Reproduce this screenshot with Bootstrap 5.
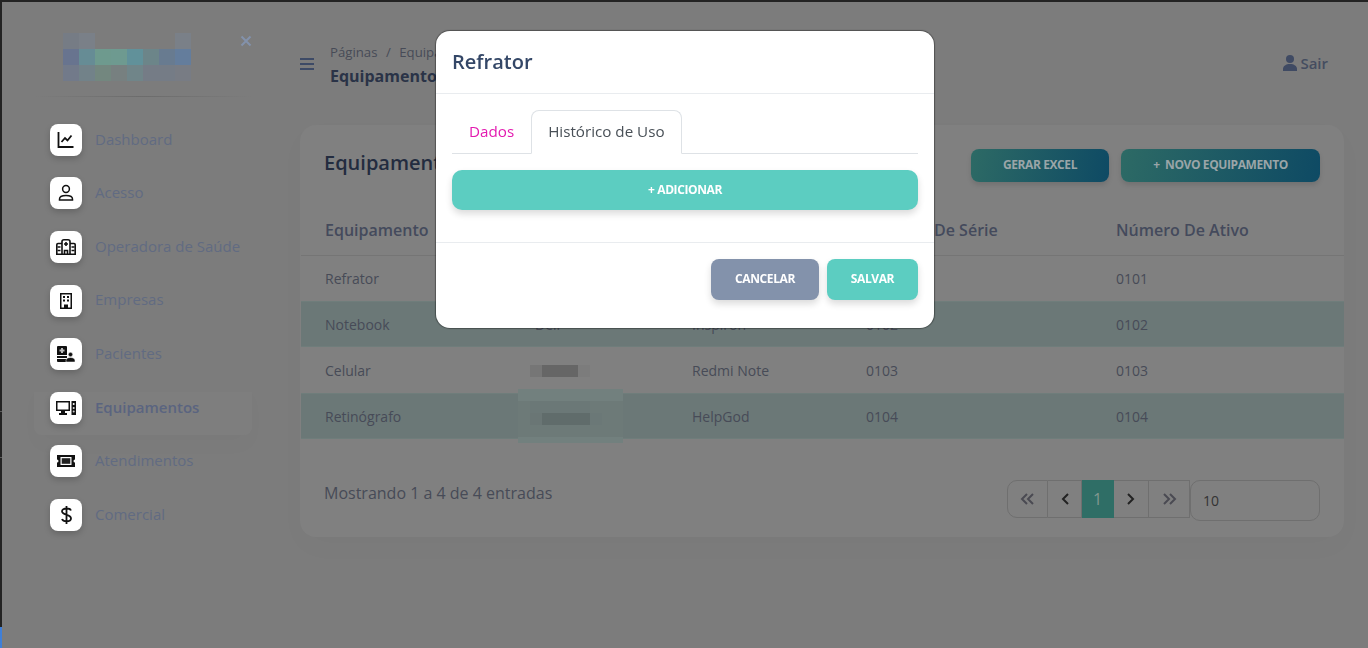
<!DOCTYPE html>
<html lang="pt-BR">
<head>
<meta charset="utf-8">
<title>Equipamentos</title>
<link href="https://cdn.jsdelivr.net/npm/bootstrap@5.3.0/dist/css/bootstrap.min.css" rel="stylesheet">
<style>
html,body{height:100%;overflow:hidden}
body{background:#232323;font-family:"Open Sans","Noto Sans",sans-serif;color:#474b57}
.app-frame{height:100%;padding:2px 0 0 2px;position:relative}
.edge-blue{position:absolute;left:0;bottom:0;width:2px;height:21px;background:#3f7fd8}
.edge-line{position:absolute;left:0;width:2px;height:1px;background:#5c5c5c}
.edge-a{top:411px}.edge-b{top:457px}
.app-body{height:100%;background:#7c7c7c;display:flex}
.side{width:272px;flex:none;padding:31px 22px 0 32px;position:relative}
.logo-box{height:48px;padding-left:29px;margin-bottom:15px}
.side-x{position:absolute;left:238px;top:33px;color:#8392ab}
.side-rule{height:1px;margin:0 0 16px;background:linear-gradient(90deg,transparent,#6c6c6c 50%,transparent)}
.side-item{display:flex;align-items:center;height:53.6px;padding-left:16px;font-size:15px;color:#616b82;text-decoration:none;border-radius:8px}
.side-item.on{font-weight:600;color:#5a6480;background:linear-gradient(180deg,transparent 20%,#7e7e7e 21%);box-shadow:0 12px 20px rgba(0,0,0,.015)}
.side-lbl{position:relative;top:-1px}
.tile{width:32px;height:32px;border-radius:8px;background:#fff;display:flex;align-items:center;justify-content:center;margin-right:13px;box-shadow:0 3px 6px rgba(0,0,0,.18);flex:none}
.tile svg{display:block}
.main-col{flex:1;min-width:0;padding:0 24px 0 26px}
.top-bar{height:123px;padding-top:40px;display:flex;align-items:flex-start}
.burger{width:14px;margin-top:16px;margin-right:16px}
.burger i{display:block;height:2px;background:#3d4a66;margin-bottom:3px}
.crumbs{font-size:13.2px;line-height:20px;color:#474b57}
.crumbs .sep{padding:0 8.5px}
.crumb-title{font-size:16px;font-weight:700;color:#2a3347;line-height:24px;margin-top:2px}
.sair{margin-left:auto;margin-right:16px;margin-top:9px;font-size:15px;font-weight:600;color:#454d60;display:flex;align-items:center;gap:3px;line-height:24px}
.panel{background:#808080;border-radius:16px;height:412px;padding:24px 24px 0 24px;box-shadow:0 10px 30px rgba(0,0,0,.02);position:relative}
.panel-head{display:flex;align-items:flex-start}
.panel-title{font-size:20px;font-weight:600;color:#232c3f;line-height:30px;margin-top:-1px}
.grad-btn{height:33px;border-radius:8px;border:0;padding:0 0 2px;font-size:12px;font-weight:700;letter-spacing:-.025rem;color:#9aa5a8;background:linear-gradient(100deg,#2d6a65,#0e4a64);box-shadow:0 3px 5px rgba(0,0,0,.12)}
.grad-a{width:138px;margin-left:auto;margin-right:12px}
.grad-b{width:199px}
.eq-table{width:1043px;margin:23px -24px 0 -23px;table-layout:fixed;border-collapse:collapse;color:#474b57;font-size:14px}
.eq-table th{font-size:16px;font-weight:600;color:#444a5c;height:50px;padding:0;vertical-align:middle;border-bottom:1px solid #757575}
.eq-table td{height:46px;padding:0;vertical-align:middle}
.eq-table tr>*:first-child{padding-left:24px}
.eq-table tbody tr:nth-child(even) td{background:#6b7877;box-shadow:inset 0 1px 0 #6f7d7b,inset 0 -1px 0 #6f7d7b}
.c1{width:234px}.c2{width:157px}.c3{width:174px}.c4{width:250px}
.foot-row{display:flex;align-items:flex-start;margin-top:41px}
.count-txt{font-size:16px;line-height:24px;color:#474b57;margin-top:1px}
.pager{margin-left:auto;display:flex;height:38px}
.pg{display:flex;align-items:center;justify-content:center;border:1px solid #6f6f6f;border-left-width:0;height:38px;color:#222}
.pg-1{width:41px;border-left-width:1px;border-radius:10px 0 0 10px;color:#4a4a52}
.pg-2{width:34px}
.pg-on{width:32px;background:#2f6e66;color:#82978f;border-color:#2f6e66;font-size:16px}
.pg-3{width:35px}
.pg-4{width:41px;color:#4a4a52}
.size-box{width:130px;height:41px;border:1px solid #6f6f6f;border-radius:10px;font-size:14px;color:#333;padding:9px 12px 0;line-height:22px}
.blur-cell{position:relative;display:block;height:46px}
.blur-svg{position:absolute;left:-6px;top:0}
.blur-tall{left:-17px;top:-4px}
.pop{display:block;background:transparent}
.pop .modal-dialog{max-width:498px;margin:31px auto 0 436px}
.pop .modal-content{border:0;border-radius:14px;box-shadow:0 0 1px 1px rgba(0,0,0,.35);overflow:hidden}
.pop .modal-header{height:63px;padding:0 16px;border-bottom:1px solid #e9ecef}
.pop .modal-title{font-size:20px;font-weight:600;color:#344767;line-height:30px}
.pop .modal-body{padding:16px 16px 32px}
.pop .nav-tabs{border-bottom:1px solid #dee2e6}
.pop .nav-link{font-size:15.2px;line-height:24px;padding:8px 16px;height:44px;color:#e31bb0;border-radius:8px 8px 0 0}
.pop .nav-link.active{color:#495057;border-color:#dee2e6 #dee2e6 #fff}
.add-btn{display:block;width:100%;height:40px;margin-top:16px;border:0;border-radius:10px;background:#5ccdc1;color:#fff;font-size:12px;font-weight:700;letter-spacing:-.025rem;box-shadow:0 4px 7px rgba(0,0,0,.14)}
.pop .modal-footer{padding:16px;height:86px;border-top:1px solid #e9ecef;align-items:flex-start;gap:8px}
.pop .modal-footer>*{margin:0}
.act-btn{height:41px;border:0;border-radius:8px;color:#fff;font-size:12px;font-weight:700;letter-spacing:-.025rem;box-shadow:0 4px 7px rgba(0,0,0,.14);padding:0 0 2px}
.act-gray{width:108px;background:#8392ab}
.act-teal{width:91px;background:#5ccdc1}
</style>
</head>
<body>
<div class="app-frame">
  <span class="edge-line edge-a"></span><span class="edge-line edge-b"></span><span class="edge-blue"></span>
  <div class="app-body">
    <aside class="side">
      <div class="logo-box">
        <svg width="128" height="48" viewBox="0 0 128 48" aria-label="logo">
          <g>
            <rect x="0" y="0" width="16" height="16" fill="#767c85"/><rect x="16" y="0" width="16" height="16" fill="#7a8088"/><rect x="32" y="0" width="80" height="16" fill="#7c7c7c"/><rect x="112" y="0" width="16" height="16" fill="#7a8088"/>
            <rect x="0" y="16" width="16" height="16" fill="#68748f"/><rect x="16" y="16" width="16" height="16" fill="#668c95"/><rect x="32" y="16" width="16" height="16" fill="#6e9a8e"/><rect x="48" y="16" width="16" height="16" fill="#6e9a90"/><rect x="64" y="16" width="16" height="16" fill="#61919a"/><rect x="80" y="16" width="16" height="16" fill="#6c8589"/><rect x="96" y="16" width="16" height="16" fill="#687b90"/><rect x="112" y="16" width="16" height="16" fill="#647d9c"/>
            <rect x="0" y="32" width="16" height="16" fill="#727a8a"/><rect x="16" y="32" width="16" height="16" fill="#728289"/><rect x="32" y="32" width="16" height="16" fill="#73877f"/><rect x="48" y="32" width="16" height="16" fill="#778080"/><rect x="64" y="32" width="16" height="16" fill="#708589"/><rect x="80" y="32" width="32" height="16" fill="#757c86"/><rect x="112" y="32" width="16" height="16" fill="#787c84"/>
          </g>
        </svg>
      </div>
      <svg class="side-x" width="12" height="12" viewBox="0 0 12 12"><path d="M1.500 1.500l9 9M10.500 1.500l-9 9" stroke="currentColor" stroke-width="2" fill="none"/></svg>
      <div class="side-rule"></div>
      <a class="side-item" href="#"><span class="tile"><svg width="18" height="18" viewBox="0 0 18 18" fill="none" stroke="#111" stroke-width="1.800"><path d="M1.500 1v15h15"/><path d="M4.500 11l3.500-4 2.500 2.500 4-5"/></svg></span><span class="side-lbl">Dashboard</span></a>
      <a class="side-item" href="#"><span class="tile"><svg width="16" height="18" viewBox="0 0 16 18" fill="none" stroke="#111" stroke-width="1.500"><circle cx="8" cy="5" r="3.400"/><path d="M1.500 16v-1c0-2.300 3.200-3.500 6.500-3.500s6.500 1.200 6.500 3.500v1z"/></svg></span><span class="side-lbl">Acesso</span></a>
      <a class="side-item" href="#"><span class="tile"><svg width="20" height="16" viewBox="0 0 20 16" fill="none" stroke="#111" stroke-width="1.600"><path d="M6 2.500C6 1.500 7 .8 8 .8h4c1 0 2 .7 2 1.700V15.200H6zM6 4.500H2C1.200 4.500.8 5 .8 5.700v9.500H6M14 4.500h4c.8 0 1.200.5 1.200 1.200v9.500H14"/><path d="M8.500 15v-3.500h3V15M10 3v4M8 5h4"/><path d="M1.500 8h3M1.500 11.500h3M15.500 8h3M15.500 11.500h3"/></svg></span><span class="side-lbl">Operadora de Saúde</span></a>
      <a class="side-item" href="#"><span class="tile"><svg width="12" height="16" viewBox="0 0 12 16"><path fill="#111" d="M0 0h12v16H0z"/><path fill="#fff" d="M1.500 1.500h9v13h-2.500v-3h-4v3h-2.500z"/><path fill="#111" d="M3 3h2v2H3zM7 3h2v2H7zM3 6.500h2v2H3zM7 6.500h2v2H7z"/></svg></span><span class="side-lbl">Empresas</span></a>
      <a class="side-item" href="#"><span class="tile"><svg width="18" height="16" viewBox="0 0 18 16"><path fill="#111" d="M0 1a1 1 0 0 1 1-1h8a1 1 0 0 1 1 1v14a1 1 0 0 1-1 1H1a1 1 0 0 1-1-1z"/><path fill="#bbb" d="M4 2h2v1.500h1.500v2H6V7H4V5.500H2.500v-2H4z"/><path fill="#fff" d="M0 9h10v1H0zM0 12h10v1H0z"/><circle cx="13.500" cy="8.500" r="2.200" fill="#111" stroke="#fff" stroke-width=".5"/><path fill="#111" stroke="#fff" stroke-width=".5" d="M9 16v-1.500c0-1.800 2-3 4.500-3s4.500 1.200 4.500 3V16z"/></svg></span><span class="side-lbl">Pacientes</span></a>
      <a class="side-item on" href="#"><span class="tile"><svg width="20" height="14" viewBox="0 0 20 14"><path fill="#111" d="M0 0h14v10H9v2h2v2H3v-2h2v-2H0z"/><path fill="#fff" d="M1.500 1.500h11v7h-11z"/><path fill="#111" d="M15.500 0h4.500v14h-4.500z"/><circle cx="17.700" cy="3" r="1" fill="#fff"/><circle cx="17.700" cy="7" r="1" fill="#ddd"/><circle cx="17.700" cy="10.500" r="1" fill="#ccc"/></svg></span><span class="side-lbl">Equipamentos</span></a>
      <a class="side-item" href="#"><span class="tile"><svg width="18" height="12" viewBox="0 0 18 12"><path fill="#111" d="M0 0h18v4.500a1.500 1.500 0 0 0 0 3V12H0V7.500a1.500 1.500 0 0 0 0-3z"/><path fill="#fff" d="M3.500 2h11v8h-11z"/><path fill="#222" d="M4.700 3.200h8.600v5.600H4.700z"/></svg></span><span class="side-lbl">Atendimentos</span></a>
      <a class="side-item" href="#"><span class="tile"><svg width="11" height="18" viewBox="0 0 11 18" fill="none" stroke="#111" stroke-width="1.800"><path d="M10 4.500C9.500 3.300 8 2.500 5.500 2.500 3 2.500 1 3.600 1 5.300 1 7 3 8 5.500 8.800 8 9.500 10 10.500 10 12.500c0 1.800-2 2.800-4.500 2.800S1.500 14.400 1 13M5.500 0v18"/></svg></span><span class="side-lbl">Comercial</span></a>
    </aside>
    <main class="main-col">
      <header class="top-bar">
        <div class="burger"><i></i><i></i><i></i></div>
        <div>
          <div class="crumbs">Páginas<span class="sep">/</span>Equipamentos</div>
          <div class="crumb-title">Equipamentos</div>
        </div>
        <div class="sair"><svg width="14" height="16" viewBox="0 0 14 16" fill="#3f4a63"><circle cx="7" cy="4" r="4"/><path d="M0 16v-2c0-3 3-5 7-5s7 2 7 5v2z"/></svg>Sair</div>
      </header>
      <section class="panel">
        <div class="panel-head">
          <div class="panel-title">Equipamentos</div>
          <button class="grad-btn grad-a" type="button">GERAR EXCEL</button>
          <button class="grad-btn grad-b" type="button">+&nbsp; NOVO EQUIPAMENTO</button>
        </div>
        <table class="eq-table">
          <thead><tr><th class="c1">Equipamento</th><th class="c2">Marca</th><th class="c3">Modelo</th><th class="c4">Número De Série</th><th>Número De Ativo</th></tr></thead>
          <tbody>
            <tr><td>Refrator</td><td>Canon</td><td>RK-F2</td><td>0101</td><td>0101</td></tr>
            <tr><td>Notebook</td><td>Dell</td><td>Inspiron</td><td>0102</td><td>0102</td></tr>
            <tr><td>Celular</td><td><span class="blur-cell"><svg class="blur-svg" width="62" height="46" viewBox="0 0 62 46"><rect x="1" y="18" width="12" height="12" fill="#767676"/><rect x="13" y="18" width="36" height="12" fill="#666"/><rect x="49" y="18" width="12" height="12" fill="#7c7c7c"/></svg></span></td><td>Redmi Note</td><td>0103</td><td>0103</td></tr>
            <tr><td>Retinógrafo</td><td><span class="blur-cell"><svg class="blur-svg blur-tall" width="105" height="54" viewBox="0 0 105 54"><rect x="0" y="0" width="105" height="12" fill="#72807e"/><rect x="0" y="12" width="105" height="36" fill="#6d7a78"/><rect x="0" y="48" width="105" height="6" fill="#72807e"/><rect x="12" y="12" width="60" height="12" fill="#6b7877"/><rect x="12" y="24" width="12" height="12" fill="#6a7675"/><rect x="24" y="24" width="48" height="12" fill="#606c6b"/><rect x="72" y="24" width="12" height="12" fill="#6b7877"/></svg></span></td><td>HelpGod</td><td>0104</td><td>0104</td></tr>
          </tbody>
        </table>
        <div class="foot-row">
          <div class="count-txt">Mostrando 1 a 4 de 4 entradas</div>
          <div class="pager">
            <span class="pg pg-1"><svg width="15" height="12" viewBox="0 0 15 12" fill="none" stroke="currentColor" stroke-width="2"><path d="M7 1L2 6l5 5M13 1L8 6l5 5"/></svg></span>
            <span class="pg pg-2"><svg width="8" height="12" viewBox="0 0 8 12" fill="none" stroke="currentColor" stroke-width="2"><path d="M7 1L2 6l5 5"/></svg></span>
            <span class="pg pg-on">1</span>
            <span class="pg pg-3"><svg width="8" height="12" viewBox="0 0 8 12" fill="none" stroke="currentColor" stroke-width="2"><path d="M1 1l5 5-5 5"/></svg></span>
            <span class="pg pg-4"><svg width="15" height="12" viewBox="0 0 15 12" fill="none" stroke="currentColor" stroke-width="2"><path d="M2 1l5 5-5 5M8 1l5 5-5 5"/></svg></span>
          </div>
          <div class="size-box">10</div>
        </div>
      </section>
    </main>
  </div>
  <div class="modal pop" tabindex="-1">
    <div class="modal-dialog">
      <div class="modal-content">
        <div class="modal-header"><h5 class="modal-title">Refrator</h5></div>
        <div class="modal-body">
          <ul class="nav nav-tabs">
            <li class="nav-item"><a class="nav-link" href="#">Dados</a></li>
            <li class="nav-item"><a class="nav-link active" href="#">Histórico de Uso</a></li>
          </ul>
          <button class="add-btn" type="button">+ ADICIONAR</button>
        </div>
        <div class="modal-footer">
          <button class="act-btn act-gray" type="button">CANCELAR</button>
          <button class="act-btn act-teal" type="button">SALVAR</button>
        </div>
      </div>
    </div>
  </div>
</div>
<script src="https://cdn.jsdelivr.net/npm/bootstrap@5.3.0/dist/js/bootstrap.bundle.min.js"></script>
</body>
</html>
